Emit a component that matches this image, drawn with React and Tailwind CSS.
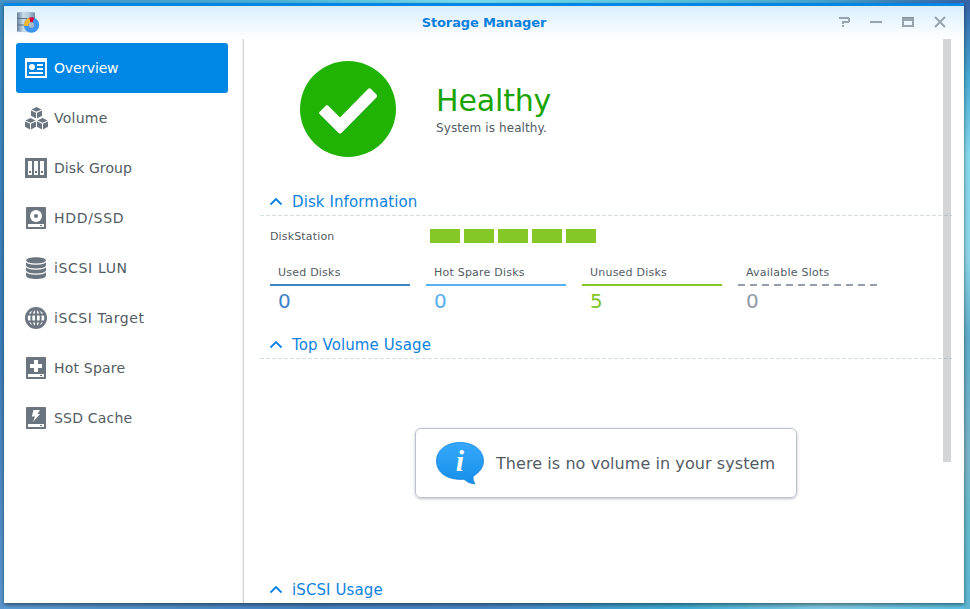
import React from "react";

const GREY = "#6b7580";

function OverviewIcon() {
  return (
    <svg width="24" height="24" viewBox="0 0 24 24" fill="#fff" shapeRendering="crispEdges">
      <path fillRule="evenodd" d="M1 2h22v20H1zM3 6v14h18V6z" />
      <circle cx="8" cy="11" r="3" shapeRendering="auto" />
      <path d="M13 8h6v2h-6zM13 12h6v2h-6zM5 16h14v2H5z" />
    </svg>
  );
}

function Cube({ x, y }) {
  return (
    <g transform={`translate(${x} ${y})`}>
      <path d="M5.5 0L10.6 2.4L5.5 4.8L0.4 2.4Z" />
      <path d="M0 3.4L5 5.8V11.4L0 8.8Z" />
      <path d="M11 3.4L6 5.8V11.4L11 8.8Z" />
    </g>
  );
}

function VolumeIcon() {
  return (
    <svg width="24" height="24" viewBox="0 0 24 24" fill={GREY}>
      <Cube x="7" y="1" />
      <Cube x="1" y="12" />
      <Cube x="13" y="12" />
    </svg>
  );
}

function DiskGroupIcon() {
  return (
    <svg width="24" height="24" viewBox="0 0 24 24" fill={GREY} shapeRendering="crispEdges">
      <rect x="1" y="2" width="22" height="20" rx="1" />
      <path fill="#fff" d="M4 5h4v14H4zM10 5h4v14h-4zM16 5h4v14h-4z" />
      <path d="M5 15h2v2H5zM11 15h2v2h-2zM17 15h2v2h-2z" />
    </svg>
  );
}

function DriveBase({ children }) {
  return (
    <svg width="24" height="24" viewBox="0 0 24 24">
      <rect x="2" y="1" width="20" height="22" rx="0.8" fill={GREY} />
      <rect x="4" y="18" width="16" height="3" fill="#fff" />
      <rect x="16" y="19" width="2" height="1" fill={GREY} />
      {children}
    </svg>
  );
}

function HddIcon() {
  return (
    <DriveBase>
      <circle cx="12" cy="10" r="6" fill="#fff" />
      <circle cx="12" cy="10" r="2" fill={GREY} />
    </DriveBase>
  );
}

function HotSpareIcon() {
  return (
    <DriveBase>
      <path fill="#fff" d="M10 4h4v4h4v4h-4v4h-4v-4H6V8h4z" />
    </DriveBase>
  );
}

function SsdIcon() {
  return (
    <DriveBase>
      <path fill="#fff" d="M9.5 4H16l-2.5 4H16l-7 8 2-5.5H7.8z" />
    </DriveBase>
  );
}

function LunIcon() {
  return (
    <svg width="24" height="24" viewBox="0 0 24 24">
      <path fill={GREY} d="M2 4.5C2 0 22 0 22 4.500V19.500C22 24.200 2 24.200 2 19.500Z" />
      <g fill="none" stroke="#fff" strokeWidth="1.200">
        <path d="M1.500 4.800C3 9.200 21 9.200 22.500 4.800M1.500 9.800C3 14.200 21 14.200 22.500 9.800M1.500 14.800C3 19.200 21 19.200 22.500 14.800" />
      </g>
    </svg>
  );
}

function TargetIcon() {
  return (
    <svg width="24" height="24" viewBox="0 0 24 24">
      <circle cx="12" cy="12" r="11" fill={GREY} />
      <circle cx="12" cy="12" r="8.300" fill="#fff" />
      <g fill="none" stroke={GREY} strokeWidth="1.900">
        <path d="M12 2v20M3 8.500h18M3 15.500h18" />
        <ellipse cx="12" cy="12" rx="4.700" ry="9" />
      </g>
    </svg>
  );
}

function AppIcon() {
  return (
    <svg width="24" height="24" viewBox="0 0 24 24">
      <defs>
        <linearGradient id="metal">
          <stop offset="0" stopColor="#66809a" />
          <stop offset="0.350" stopColor="#c9dcec" />
          <stop offset="0.650" stopColor="#b3c9dc" />
          <stop offset="1" stopColor="#6f8aa5" />
        </linearGradient>
      </defs>
      <path d="M1 1.500Q10 0 19 1.500V20.500Q10 22 1 20.500Z" fill="url(#metal)" />
      <path d="M1 7.500h18M1 14h18" stroke="#5d7186" strokeWidth="1" />
      <circle cx="15.500" cy="14" r="5.200" fill="none" stroke="#3d94f3" strokeWidth="5" />
      <path d="M7.800 15A7.700 7.700 0 0 1 13.600 6.600L14.600 11.400A3 3 0 0 0 12.600 15Z" fill="#f3b62f" />
      <path d="M13.200 6.700Q15.800 5.900 18.200 6.800L16.700 11.200H14.500Z" fill="#e4002b" />
      <circle cx="15.500" cy="14" r="2.600" fill="#a9bccb" />
    </svg>
  );
}

const menu = [
  { label: "Volume", icon: <VolumeIcon />, track: "tracking-[0.25px]" },
  { label: "Disk Group", icon: <DiskGroupIcon />, track: "tracking-[0.08px]" },
  { label: "HDD/SSD", icon: <HddIcon />, track: "tracking-[0.7px]" },
  { label: "iSCSI LUN", icon: <LunIcon />, track: "tracking-[0.65px]" },
  { label: "iSCSI Target", icon: <TargetIcon />, track: "tracking-[0.6px]" },
  { label: "Hot Spare", icon: <HotSpareIcon />, track: "tracking-[0.2px]" },
  { label: "SSD Cache", icon: <SsdIcon />, track: "tracking-[0.2px]" },
];

function Sidebar() {
  return (
    <nav className="w-[239px] shrink-0 pl-3 pt-1 text-[14px] text-[#525c64]">
      <div className="flex h-[50px] w-[212px] items-center gap-[6px] rounded-[3px] bg-[#0086e5] pl-2 text-white">
        <OverviewIcon />
        <span className="tracking-[-0.2px]">Overview</span>
      </div>
      {menu.map((m) => (
        <div key={m.label} className="flex h-[50px] w-[212px] items-center gap-[6px] pl-2">
          {m.icon}
          <span className={m.track}>{m.label}</span>
        </div>
      ))}
    </nav>
  );
}

function Section({ title }) {
  return (
    <div className="h-7 w-[692px]">
      <div className="flex h-[27px] items-center pl-[9px] text-[15px] text-[#0c82e0]">
        <svg className="mr-[9px]" width="14" height="10" viewBox="0 0 14 10" fill="none" stroke="#0c82e0" strokeWidth="1.800">
          <path d="M1.500 7.500L7 2L12.500 7.500" />
        </svg>
        <span className="pt-[2px] tracking-[0.1px]">{title}</span>
      </div>
      <svg className="block" width="692" height="1">
        <path d="M0 .5H692" stroke="#d3dfe6" strokeDasharray="4 2" />
      </svg>
    </div>
  );
}

const stats = [
  { label: "Used Disks", value: "0", text: "text-[#3f83c8]", stroke: "#3f86c9" },
  { label: "Hot Spare Disks", value: "0", text: "text-[#57aeed]", stroke: "#57b0ef" },
  { label: "Unused Disks", value: "5", text: "text-[#7fc524]", stroke: "#85c726" },
  { label: "Available Slots", value: "0", text: "text-[#929ca8]", stroke: "#95a0ac", dash: "7 5" },
];

function Content() {
  return (
    <main className="relative flex-1 overflow-hidden pl-4">
      <div className="flex h-[149px] pl-10 pt-[22px]">
        <svg width="96" height="96" viewBox="0 0 96 96">
          <circle cx="48" cy="48" r="48" fill="#20b304" />
          <path d="M19.500 52L26 45.500Q27 44.500 28.500 46L40 57.500L68 29Q69.500 27.500 71 29L76.500 34.500Q78 36 76.500 37.500L41.500 73Q40 74.500 38.500 73L19.500 54Q18.500 53 19.500 52Z" fill="#158403" opacity=".5" />
          <path d="M19.500 51L26 44.500Q27 43.500 28.500 45L40 56.500L68 28Q69.500 26.500 71 28L76.500 33.500Q78 35 76.500 36.500L41.500 72Q40 73.500 38.500 72L19.500 53Q18.500 52 19.500 51Z" fill="#fff" />
        </svg>
        <div className="pl-10">
          <div className="mt-[22px] h-[36px] text-[30px] leading-[36px] tracking-[-0.15px] text-[#19a403]">Healthy</div>
          <div className="text-[12px] leading-[18px] tracking-[0.1px] text-[#525c64]">System is healthy.</div>
        </div>
      </div>
      <Section title="Disk Information" />
      <div className="flex h-[40px] items-center pl-[10px] text-[11px] text-[#525c64]">
        <span className="w-40 pt-[2px] tracking-[0.15px]">DiskStation</span>
        <div className="flex gap-1">
          {[0, 1, 2, 3, 4].map((i) => (
            <div key={i} className="h-[14px] w-[30px] bg-[#85c726]" />
          ))}
        </div>
      </div>
      <div className="flex h-[75px] gap-4 pl-[10px] pt-[8px]">
        {stats.map((s) => (
          <div key={s.label} className="w-[140px]">
            <div className="h-5 pl-2 pt-px text-[11px] leading-4 tracking-[0.22px] text-[#525c64]">{s.label}</div>
            <svg className="block" width="140" height="2">
              <path d="M0 1H140" stroke={s.stroke} strokeWidth="2" strokeDasharray={s.dash} />
            </svg>
            <div className={`pl-2 text-[20px] leading-[30px] ${s.text}`}>{s.value}</div>
          </div>
        ))}
      </div>
      <Section title="Top Volume Usage" />
      <div className="h-[217px] pl-[155px] pt-[69px]">
        <div className="flex h-[70px] w-[382px] items-center rounded-[6px] border border-[#b8c4d2] pl-5 shadow-[0_1px_3px_rgba(0,0,0,0.25)]">
          <svg className="shrink-0" width="48" height="44" viewBox="0 0 48 44">
            <defs>
              <linearGradient id="bubble" x1="0" x2="0" y1="0" y2="1">
                <stop offset="0" stopColor="#35a8fb" />
                <stop offset="1" stopColor="#168fe8" />
              </linearGradient>
            </defs>
            <path d="M24 1.500C37.500 1.500 47.500 9 47.500 20C47.500 27 43 31.500 37 35.500Q36.500 39.500 39 43Q32 42.500 28 38.300C12 39.500 .5 32 .5 20C.5 9 10.500 1.500 24 1.500Z" fill="url(#bubble)" stroke="#1686dd" strokeWidth=".8" />
            <text x="24" y="29.500" textAnchor="middle" fill="#fff" className="font-['Liberation_Serif'] text-[30px] font-bold italic">i</text>
          </svg>
          <span className="whitespace-nowrap pl-3 pt-px text-[16px] tracking-[0.07px] text-[#525c64]">There is no volume in your system</span>
        </div>
      </div>
      <Section title="iSCSI Usage" />
      <div className="absolute left-[699px] top-0 h-[423px] w-2 bg-[rgba(136,138,141,0.36)]" />
    </main>
  );
}

function TitleBar() {
  return (
    <header className="flex h-[33px] items-center bg-linear-to-b from-[#d9eefd] to-white pl-3">
      <AppIcon />
      <div className="flex-1 pl-24 text-center text-[13px] font-bold text-[#0b80de]">
        <span className="tracking-[-0.15px]">Storage Manager</span>
      </div>
      <svg className="mt-1.5 self-start" width="132" height="20" viewBox="0 0 132 20" fill="#98a4ae" shapeRendering="crispEdges">
        <path d="M7 5H17V7H7ZM16 6H18V10H16ZM10 9H17V11H10ZM10 10H12V12H10ZM10 13H12V15H10Z" />
        <path d="M38 9H50V11H38Z" />
        <path fillRule="evenodd" d="M70 5H82V15H70ZM72 9V13H80V9Z" />
        <path d="M70 5H82V6H70Z" fill="#84919c" />
        <path d="M103 5L113 15M113 5L103 15" stroke="#98a4ae" strokeWidth="2" shapeRendering="auto" />
      </svg>
    </header>
  );
}

export default function App() {
  return (
    <div className="h-[609px] w-[970px] overflow-hidden bg-[linear-gradient(90deg,#4590c9,#49b2d9_28%,#78deee_48%,#5ccbe3_65%,#45a4d0_85%,#3563a8),linear-gradient(180deg,#3e8ec3,#3b7eb9_55%,#5c98cf),linear-gradient(180deg,#3563a8,#47a9d2_12%,#86d9ed_25%,#8ed5e8_42%,#5fadc9_55%,#7bb4c8_75%,#64b9ca_85%,#5eb7d2),linear-gradient(90deg,#5d9dd6,#4785c4_32%,#4b8acb_50%,#3fb0d8_70%,#84cfe9_85%,#5cc4e6)] bg-[length:970px_3px,4px_606px,6px_606px,970px_6px] bg-[position:0_0,0_3px,964px_3px,0_603px] bg-no-repeat pl-1 pt-[3px] font-['DejaVu_Sans',Verdana,sans-serif]">
      <div className="h-[600px] w-[960px] border-t-[3px] border-[#0086e5] bg-white shadow-[0_2px_4px_rgba(0,0,0,0.5)]">
        <TitleBar />
        <div className="flex h-[564px]">
          <Sidebar />
          <div className="w-px shrink-0 bg-[#d5d5d5] shadow-[-1px_0_2px_rgba(0,0,0,0.12)]" />
          <Content />
        </div>
      </div>
    </div>
  );
}
